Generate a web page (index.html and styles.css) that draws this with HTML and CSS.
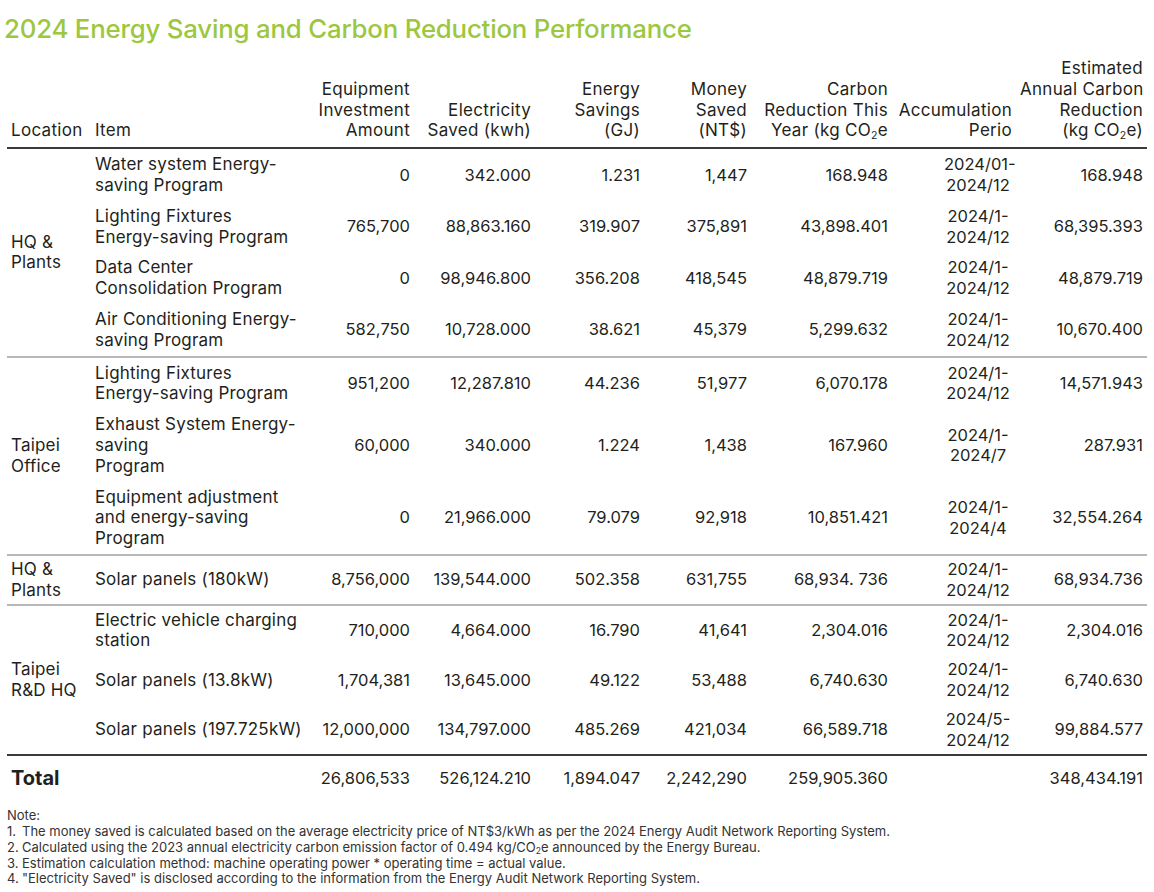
FILE: index.html
```html
<!DOCTYPE html>
<html lang="en">
<head>
<meta charset="utf-8">
<title>2024 Energy Saving and Carbon Reduction Performance</title>
<link rel="stylesheet" href="styles.css">
</head>
<body>
<div class="page">
  <h1 class="title">2024 Energy Saving and Carbon Reduction Performance</h1>
  <table class="perf">
    <colgroup>
      <col class="c-loc"><col class="c-item"><col class="c-inv"><col class="c-elec"><col class="c-gj">
      <col class="c-money"><col class="c-carbon"><col class="c-accum"><col class="c-est">
    </colgroup>
    <thead>
      <tr>
        <th class="left">Location</th>
        <th class="left">Item</th>
        <th>Equipment<br>Investment<br>Amount</th>
        <th>Electricity<br>Saved (kwh)</th>
        <th>Energy<br>Savings<br>(GJ)</th>
        <th>Money<br>Saved<br>(NT$)</th>
        <th>Carbon<br>Reduction This<br>Year (kg CO<sub>2</sub>e</th>
        <th>Accumulation<br>Perio</th>
        <th>Estimated<br>Annual Carbon<br>Reduction<br>(kg CO<sub>2</sub>e)</th>
      </tr>
    </thead>
    <tbody class="group">
      <tr>
        <td class="loc" rowspan="4">HQ &amp;<br>Plants</td>
        <td class="item">Water system Energy-<br>saving Program</td>
        <td>0</td><td>342.000</td><td>1.231</td><td>1,447</td><td>168.948</td>
        <td class="date">2024/01-<br>2024/12</td><td>168.948</td>
      </tr>
      <tr>
        <td class="item">Lighting Fixtures<br>Energy-saving Program</td>
        <td>765,700</td><td>88,863.160</td><td>319.907</td><td>375,891</td><td>43,898.401</td>
        <td class="date">2024/1-<br>2024/12</td><td>68,395.393</td>
      </tr>
      <tr>
        <td class="item">Data Center<br>Consolidation Program</td>
        <td>0</td><td>98,946.800</td><td>356.208</td><td>418,545</td><td>48,879.719</td>
        <td class="date">2024/1-<br>2024/12</td><td>48,879.719</td>
      </tr>
      <tr>
        <td class="item">Air Conditioning Energy-<br>saving Program</td>
        <td>582,750</td><td>10,728.000</td><td>38.621</td><td>45,379</td><td>5,299.632</td>
        <td class="date">2024/1-<br>2024/12</td><td>10,670.400</td>
      </tr>
    </tbody>
    <tbody class="group">
      <tr>
        <td class="loc" rowspan="3">Taipei<br>Office</td>
        <td class="item">Lighting Fixtures<br>Energy-saving Program</td>
        <td>951,200</td><td>12,287.810</td><td>44.236</td><td>51,977</td><td>6,070.178</td>
        <td class="date">2024/1-<br>2024/12</td><td>14,571.943</td>
      </tr>
      <tr>
        <td class="item">Exhaust System Energy-<br>saving<br>Program</td>
        <td>60,000</td><td>340.000</td><td>1.224</td><td>1,438</td><td>167.960</td>
        <td class="date">2024/1-<br>2024/7</td><td>287.931</td>
      </tr>
      <tr>
        <td class="item">Equipment adjustment<br>and energy-saving<br>Program</td>
        <td>0</td><td>21,966.000</td><td>79.079</td><td>92,918</td><td>10,851.421</td>
        <td class="date">2024/1-<br>2024/4</td><td>32,554.264</td>
      </tr>
    </tbody>
    <tbody class="group single">
      <tr>
        <td class="loc">HQ &amp;<br>Plants</td>
        <td class="item">Solar panels (180kW)</td>
        <td>8,756,000</td><td>139,544.000</td><td>502.358</td><td>631,755</td><td>68,934. 736</td>
        <td class="date">2024/1-<br>2024/12</td><td>68,934.736</td>
      </tr>
    </tbody>
    <tbody class="group tight last">
      <tr>
        <td class="loc" rowspan="3">Taipei<br>R&amp;D HQ</td>
        <td class="item">Electric vehicle charging<br>station</td>
        <td>710,000</td><td>4,664.000</td><td>16.790</td><td>41,641</td><td>2,304.016</td>
        <td class="date">2024/1-<br>2024/12</td><td>2,304.016</td>
      </tr>
      <tr>
        <td class="item">Solar panels (13.8kW)</td>
        <td>1,704,381</td><td>13,645.000</td><td>49.122</td><td>53,488</td><td>6,740.630</td>
        <td class="date">2024/1-<br>2024/12</td><td>6,740.630</td>
      </tr>
      <tr>
        <td class="item">Solar panels (197.725kW)</td>
        <td>12,000,000</td><td>134,797.000</td><td>485.269</td><td>421,034</td><td>66,589.718</td>
        <td class="date">2024/5-<br>2024/12</td><td>99,884.577</td>
      </tr>
    </tbody>
    <tfoot>
      <tr>
        <td class="total-label" colspan="2">Total</td>
        <td>26,806,533</td><td>526,124.210</td><td>1,894.047</td><td>2,242,290</td><td>259,905.360</td>
        <td></td><td>348,434.191</td>
      </tr>
    </tfoot>
  </table>
  <div class="notes">
    <p class="note-head">Note:</p>
    <ol class="note-list">
      <li><span class="num">1.</span><span class="txt">The money saved is calculated based on the average electricity price of NT$3/kWh as per the 2024 Energy Audit Network Reporting System.</span></li>
      <li><span class="num">2.</span><span class="txt">Calculated using the 2023 annual electricity carbon emission factor of 0.494 kg/CO<sub>2</sub>e announced by the Energy Bureau.</span></li>
      <li><span class="num">3.</span><span class="txt">Estimation calculation method: machine operating power * operating time = actual value.</span></li>
      <li><span class="num">4.</span><span class="txt">"Electricity Saved" is disclosed according to the information from the Energy Audit Network Reporting System.</span></li>
    </ol>
  </div>
</div>
</body>
</html>
```

FILE: styles.css
```css
* { box-sizing: border-box; }

html, body {
  margin: 0;
  padding: 0;
  background: #ffffff;
}

body {
  font-family: "Inter", "Liberation Sans", sans-serif;
  color: #231f20;
}

.page {
  padding: 0 7px;
}

.title {
  margin: 14px 0 0 -3px;
  font-size: 25.8px;
  line-height: 30px;
  font-weight: 500;
  color: #9cc73f;
  letter-spacing: -0.2px;
}

.perf {
  width: 1140px;
  margin-top: 14px;
  border-collapse: collapse;
  table-layout: fixed;
  font-size: 16.5px;
  line-height: 20.8px;
}

.c-loc { width: 84px; }
.c-item { width: 212px; }
.c-inv { width: 111px; }
.c-elec { width: 121px; }
.c-gj { width: 109px; }
.c-money { width: 107px; }
.c-carbon { width: 141px; }
.c-accum { width: 124px; }
.c-est { width: 131px; }

.perf th {
  font-size: 17px;
  letter-spacing: 0.3px;
  font-weight: 400;
  text-align: right;
  vertical-align: bottom;
  padding: 0 4px 6px 4px;
  white-space: nowrap;
  border-bottom: 2px solid #3a3a3a;
}

.perf th.left { text-align: left; }

.perf sub {
  font-size: 0.62em;
  line-height: 0;
  vertical-align: -0.25em;
}

.perf td {
  text-align: right;
  vertical-align: middle;
  padding: 5px 4px;
  white-space: nowrap;
}

.perf td.loc,
.perf td.item {
  text-align: left;
  font-size: 17px;
  letter-spacing: 0.2px;
}

.perf td.date {
  text-align: center;
  padding-left: 52px;
}

.group { border-bottom: 2px solid #b8b8b8; }
.group.last { border-bottom: 2px solid #3a3a3a; }
.tight td { padding-top: 4px; padding-bottom: 4px; }
.single td { padding-top: 3px; padding-bottom: 3px; }

.perf tfoot td {
  padding: 12px 4px 12px 4px;
}

.perf td.total-label {
  text-align: left;
  font-weight: 700;
  font-size: 20px;
}

.notes {
  margin-top: 7px;
  font-size: 13px;
  line-height: 15.8px;
  color: #333333;
}

.note-head { margin: 0; }

.note-list {
  list-style: none;
  margin: 0;
  padding: 0;
}

.note-list li {
  display: flex;
}

.note-list .num {
  width: 15px;
  flex: none;
}

.notes sub {
  font-size: 0.65em;
  line-height: 0;
  vertical-align: -0.2em;
}
```
